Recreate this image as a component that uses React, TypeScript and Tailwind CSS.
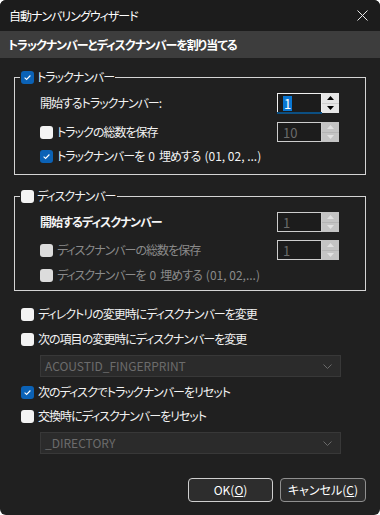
import React from 'react';

const font = "font-['Noto_Sans_CJK_JP',sans-serif] [font-feature-settings:'palt']";

type BoxProps = { checked?: boolean; disabled?: boolean };

const CheckBox = ({ checked, disabled }: BoxProps) => (
  <span
    className={`w-[13px] h-[13px] rounded-[3px] flex items-center justify-center shrink-0 ${
      checked ? 'bg-[#0b62b6]' : disabled ? 'bg-[#dcdcdc]' : 'bg-[#f3f3f3]'
    }`}
  >
    {checked && (
      <svg width="9" height="9" viewBox="0 0 9 9">
        <path d="M1.6 4.7 L3.6 6.5 L7.4 2.5" stroke="#ffffff" strokeWidth="1.1" fill="none" />
      </svg>
    )}
  </span>
);

const Arrow = ({ up, color }: { up?: boolean; color: string }) => (
  <svg width="7" height="4" viewBox="0 0 7 4">
    <path d={up ? 'M0 4 L3.5 0 L7 4 Z' : 'M0 0 L7 0 L3.5 4 Z'} fill={color} />
  </svg>
);

const Spin = ({ value, active, disabled }: { value: string; active?: boolean; disabled?: boolean }) => (
  <div className="ml-auto flex h-[20px] w-[62px] tracking-normal">
    <div
      className={`relative w-[45px] h-[20px] flex items-center pl-[5px] text-[13px] bg-[#1c1c1c] border ${
        disabled ? 'border-[#cdcdcd] text-[#6b6b6b]' : 'border-[#f0f0f0] text-white'
      }`}
    >
      {active ? <span className="bg-[#0a78d4] text-white leading-[15px] px-px">{value}</span> : <span className="leading-none">{value}</span>}
      {active && <span className="absolute left-[-1px] right-[-1px] bottom-[-2px] h-[2px] bg-[#0c4f82]" />}
    </div>
    <div className={`w-[17px] h-[20px] flex flex-col ${disabled ? 'bg-[#c4c4c4]' : 'bg-[#e6e6e6]'}`}>
      <div className={`flex-1 flex items-center justify-center border-b ${disabled ? 'border-[#b4b4b4]' : 'border-[#cfcfcf]'}`}>
        <Arrow up color={disabled ? '#e2e2e2' : '#000000'} />
      </div>
      <div className="flex-1 flex items-center justify-center">
        <Arrow color={disabled ? '#e2e2e2' : '#000000'} />
      </div>
    </div>
  </div>
);

const Dropdown = ({ text }: { text: string }) => (
  <div className="ml-[26px] w-[301px] h-[22px] flex items-center justify-between pl-[4px] pr-[8px] bg-[#2b2b2b] border border-[#383838] text-[12px] text-[#6c6c6c] tracking-normal">
    <span className="leading-none">{text}</span>
    <svg width="9" height="5" viewBox="0 0 9 5">
      <path d="M0.5 0.5 L4.5 4.5 L8.5 0.5" stroke="#6a6a6a" strokeWidth="1" fill="none" />
    </svg>
  </div>
);

const Row = ({ children, h = 'h-[22px]', mt }: { children: React.ReactNode; h?: string; mt: string }) => (
  <div className={`flex items-center gap-[4px] ${h} ${mt}`}>{children}</div>
);

const ZeroPad = ({ prefix, tail }: { prefix: string; tail: string }) => (
  <span className="leading-none">
    {prefix}
    <span className="tracking-normal mx-[4px]">0</span>
    埋めする
    <span className="tracking-normal ml-[4px]">{tail}</span>
  </span>
);

export default function App() {
  return (
    <div className={`w-[380px] h-[515px] bg-[#202020] text-[12px] tracking-[-1px] text-[#f2f2f2] flex flex-col overflow-hidden rounded-[6px] ${font}`}>
      <div className="h-[31px] shrink-0 bg-[#1c1c1c] flex items-center justify-between pl-[9px] pr-[12px]">
        <span className="leading-none text-[12px] text-white">自動ナンバリングウィザード</span>
        <svg width="11" height="11" viewBox="0 0 11 11">
          <path d="M0.5 0.5 L10.5 10.5 M10.5 0.5 L0.5 10.5" stroke="#e8e8e8" strokeWidth="1" />
        </svg>
      </div>
      <div className="h-[27px] shrink-0 bg-[#3d3d3d] flex items-center pl-[8px]">
        <span className="font-bold text-[12px] text-white leading-none">トラックナンバーとディスクナンバーを割り当てる</span>
      </div>

      <div className="flex flex-col px-[14px]">
        <fieldset className="mt-[12px] border border-[#d4d4d4] pl-[5px] pr-0 pb-[8px]">
          <legend className="px-[1px] h-[14px]">
            <span className="flex items-center gap-[3px] h-[14px]">
              <CheckBox checked />
              <span className="leading-none">トラックナンバー</span>
            </span>
          </legend>
          <div className="flex flex-col pl-[20px] pr-[26px]">
            <Row mt="mt-[8px]">
              <span className="leading-none">開始するトラックナンバー:</span>
              <Spin value="1" active />
            </Row>
            <Row mt="mt-[7px]">
              <CheckBox />
              <span className="leading-none">トラックの総数を保存</span>
              <Spin value="10" disabled />
            </Row>
            <Row mt="mt-[3px]" h="h-[20px]">
              <CheckBox checked />
              <ZeroPad prefix="トラックナンバーを" tail="(01, 02, ...)" />
            </Row>
          </div>
        </fieldset>

        <fieldset className="mt-[14px] border border-[#d4d4d4] pl-[5px] pr-0 pb-[5px]">
          <legend className="px-[1px] h-[14px]">
            <span className="flex items-center gap-[3px] h-[14px]">
              <CheckBox />
              <span className="leading-none">ディスクナンバー</span>
            </span>
          </legend>
          <div className="flex flex-col pl-[20px] pr-[26px]">
            <Row mt="mt-[8px]">
              <span className="leading-none font-bold text-[#f4f4f4]">開始するディスクナンバー</span>
              <Spin value="1" disabled />
            </Row>
            <Row mt="mt-[6px]">
              <CheckBox disabled />
              <span className="leading-none text-[#8a8a8a]">ディスクナンバーの総数を保存</span>
              <Spin value="1" disabled />
            </Row>
            <Row mt="mt-[4px]" h="h-[20px]">
              <CheckBox disabled />
              <span className="text-[#8a8a8a]">
                <ZeroPad prefix="ディスクナンバーを" tail="(01, 02,...)" />
              </span>
            </Row>
          </div>
        </fieldset>

        <div className="flex flex-col pl-[7px]">
          <Row mt="mt-[13px]" h="h-[20px]">
            <CheckBox />
            <span className="leading-none">ディレクトリの変更時にディスクナンバーを変更</span>
          </Row>
          <Row mt="mt-[5px]" h="h-[20px]">
            <CheckBox />
            <span className="leading-none">次の項目の変更時にディスクナンバーを変更</span>
          </Row>
        </div>
        <div className="mt-[6px]">
          <Dropdown text="ACOUSTID_FINGERPRINT" />
        </div>
        <div className="flex flex-col pl-[7px]">
          <Row mt="mt-[5px]" h="h-[20px]">
            <CheckBox checked />
            <span className="leading-none">次のディスクでトラックナンバーをリセット</span>
          </Row>
          <Row mt="mt-[4px]" h="h-[20px]">
            <CheckBox />
            <span className="leading-none">交換時にディスクナンバーをリセット</span>
          </Row>
        </div>
        <div className="mt-[6px]">
          <Dropdown text="_DIRECTORY" />
        </div>

        <div className="mt-[24px] flex justify-end gap-[7px] pr-0 tracking-normal">
          <button className="w-[85px] h-[24px] rounded-[4px] bg-[#2d2d2d] border border-[#cfcfcf] text-[12px] text-white leading-none flex items-center justify-center">
            OK(<u>O</u>)
          </button>
          <button className="w-[86px] h-[24px] rounded-[4px] bg-[#2d2d2d] border border-[#8f8f8f] text-[12px] text-white leading-none flex items-center justify-center">
            キャンセル(<u>C</u>)
          </button>
        </div>
      </div>
    </div>
  );
}
